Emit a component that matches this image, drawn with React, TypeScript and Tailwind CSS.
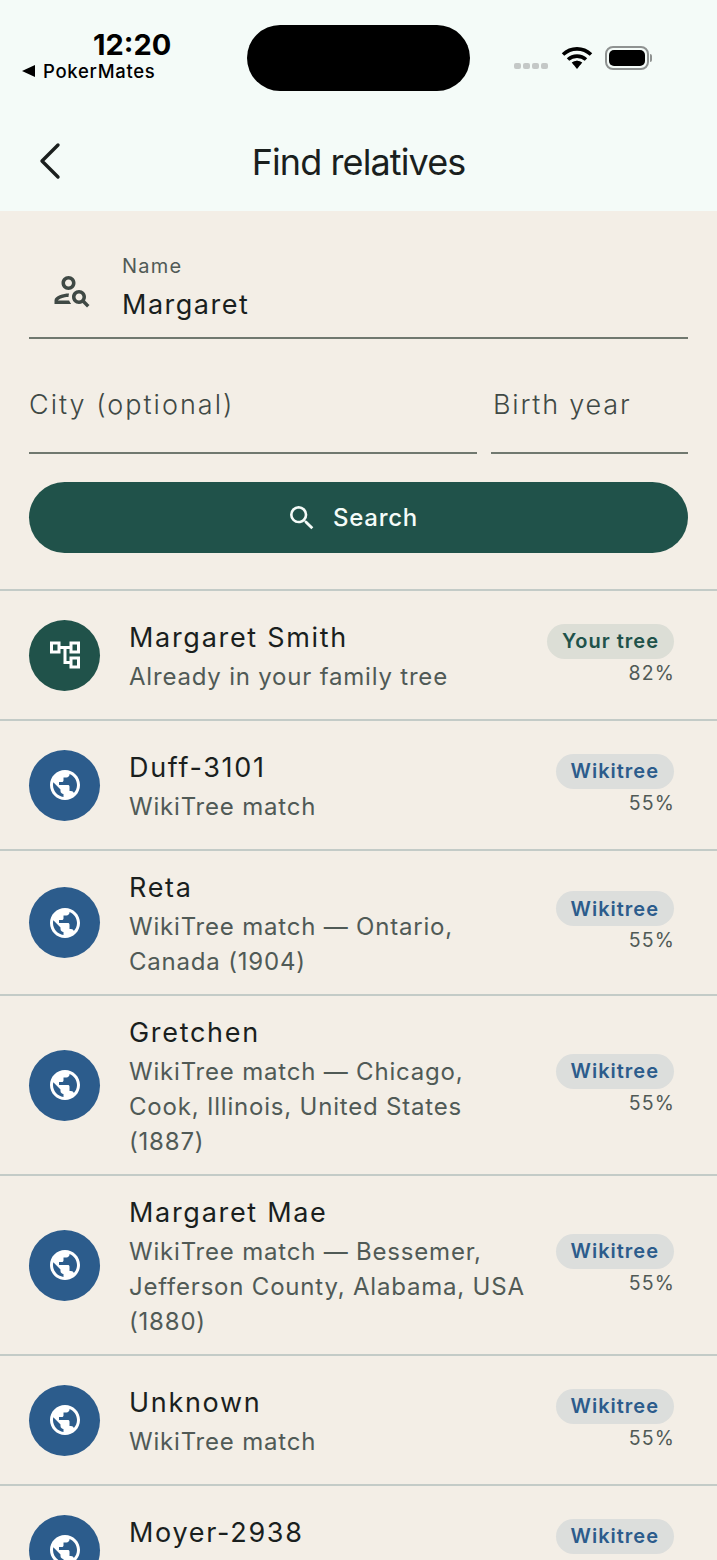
import React from "react";
import { MdOutlineAccountTree, MdOutlinePersonSearch, MdPublic, MdSearch } from "react-icons/md";

interface Relative {
  name: string;
  lines: string[];
  badge: string;
  score: string;
  inTree?: boolean;
}

const relatives: Relative[] = [
  { name: "Margaret Smith", lines: ["Already in your family tree"], badge: "Your tree", score: "82%", inTree: true },
  { name: "Duff-3101", lines: ["WikiTree match"], badge: "Wikitree", score: "55%" },
  { name: "Reta", lines: ["WikiTree match — Ontario,", "Canada (1904)"], badge: "Wikitree", score: "55%" },
  { name: "Gretchen", lines: ["WikiTree match — Chicago,", "Cook, Illinois, United States", "(1887)"], badge: "Wikitree", score: "55%" },
  { name: "Margaret Mae", lines: ["WikiTree match — Bessemer,", "Jefferson County, Alabama, USA", "(1880)"], badge: "Wikitree", score: "55%" },
  { name: "Unknown", lines: ["WikiTree match"], badge: "Wikitree", score: "55%" },
  { name: "Moyer-2938", lines: ["WikiTree match"], badge: "Wikitree", score: "55%" },
];

const StatusBar = () => (
  <div className="relative h-[105px]">
    <div className="absolute left-[93px] top-[27px] text-[29px] font-bold leading-[36px] text-black">12:20</div>
    <div className="absolute left-[22px] top-[60px] flex items-center gap-[7px] text-[18.5px] font-medium leading-[22px] tracking-[0.7px] text-black">
      <svg width="14" height="12" viewBox="0 0 14 12"><path d="M13 0v12L0 6z" fill="#000" /></svg>
      <span>PokerMates</span>
    </div>
    <div className="absolute left-[247px] top-[25px] h-[66px] w-[223px] rounded-[33px] bg-black" />
    <div className="absolute left-[514px] top-[63px] flex gap-[2px]">
      <div className="h-[6px] w-[7px] rounded-[2px] bg-[#c4c8c7]" />
      <div className="h-[6px] w-[7px] rounded-[2px] bg-[#c4c8c7]" />
      <div className="h-[6px] w-[7px] rounded-[2px] bg-[#c4c8c7]" />
      <div className="h-[6px] w-[7px] rounded-[2px] bg-[#c4c8c7]" />
    </div>
    <svg className="absolute left-[561px] top-[46px]" width="32" height="24" viewBox="0 0 32 24" fill="none" stroke="#000" strokeWidth="3.6">
      <path d="M2 8.5C10 1 22 1 30 8.5" />
      <path d="M7 13.5C12 9 20 9 25 13.5" />
      <path d="M11.5 17.5C14 15.5 18 15.5 20.5 17.5" strokeWidth="2.5" />
      <path d="M12 18L16 14.5L20 18L16 23Z" fill="#000" stroke="none" />
    </svg>
    <div className="absolute left-[605px] top-[46px] flex items-center">
      <div className="h-[24px] w-[44px] rounded-[8px] border-2 border-[#8e9291] p-[2px]">
        <div className="h-full w-full rounded-[5px] bg-black" />
      </div>
      <div className="ml-[1px] h-[8px] w-[2px] rounded-r-[2px] bg-[#8e9291]" />
    </div>
  </div>
);

const Header = () => (
  <div className="bg-[#f4fbf8]">
    <StatusBar />
    <div className="relative flex h-[106px] items-start justify-center">
      <svg className="absolute left-[38px] top-[37px]" width="24" height="38" viewBox="0 0 24 38" fill="none" stroke="#1a1f1e" strokeWidth="3.4" strokeLinecap="round" strokeLinejoin="round">
        <path d="M20 3L4 19L20 35" />
      </svg>
      <h1 className="mt-[35px] text-[36px] font-normal leading-[44px] tracking-[-0.9px] text-[#1a1f1e]">Find relatives</h1>
    </div>
  </div>
);

const SearchForm = () => (
  <div className="px-[29px] pt-[37px]">
    <div className="flex h-[91px] items-start border-b-2 border-[#70786f]">
      <div className="flex h-[84px] w-[93px] items-center pl-[22px]">
        <MdOutlinePersonSearch className="text-[42px] text-[#3f4945]" />
      </div>
      <div>
        <div className="mt-[4px] text-[20px] leading-[28px] tracking-[1.2px] text-[#505a56]">Name</div>
        <div className="mt-[7px] text-[27px] leading-[36px] tracking-[1.5px] text-[#1a1f1e]">Margaret</div>
      </div>
    </div>
    <div className="mt-[24px] flex gap-[14px]">
      <div className="h-[91px] flex-1 border-b-2 border-[#70786f] pt-[24px] text-[27px] font-light leading-[36px] tracking-[2px] text-[#3f4945]">City (optional)</div>
      <div className="h-[91px] w-[197px] border-b-2 border-[#70786f] pl-[2px] pt-[24px] text-[27px] font-light leading-[36px] tracking-[1.8px] text-[#3f4945]">Birth year</div>
    </div>
    <button className="mt-[28px] flex h-[71px] w-full items-center justify-center gap-[15px] rounded-full bg-[#20524a] pr-[13px] text-[24px] font-medium tracking-[0.7px] text-[#f4fbf8]">
      <MdSearch className="text-[32px]" />
      <span>Search</span>
    </button>
  </div>
);

const RelativeRow = ({ relative }: { relative: Relative }) => (
  <div className="flex min-h-[130px] items-center border-t-2 border-[#c3cbc7] py-[15px] pl-[29px] pr-[43px]">
    <div className={`flex h-[71px] w-[71px] shrink-0 items-center justify-center rounded-full ${relative.inTree ? "bg-[#20524a]" : "bg-[#2c5c8c]"}`}>
      {relative.inTree ? <MdOutlineAccountTree className="text-[36px] text-white" /> : <MdPublic className="text-[36px] text-white" />}
    </div>
    <div className="ml-[29px] min-w-0 flex-1 pt-[4px]">
      <div className="text-[27px] leading-[36px] tracking-[1.7px] text-[#1a1f1e]">{relative.name}</div>
      <div className="mt-[3px]">
        {relative.lines.map((line) => (
          <div key={line} className="text-[24px] leading-[35px] tracking-[0.8px] text-[#505a56]">{line}</div>
        ))}
      </div>
    </div>
    <div className="flex shrink-0 flex-col items-end">
      <div className={`flex h-[35px] items-center rounded-full px-[15px] text-[20px] font-semibold tracking-[1px] ${relative.inTree ? "bg-[#dcded6] text-[#20524a]" : "bg-[#dcdedc] text-[#2c5c8c]"}`}>
        {relative.badge}
      </div>
      <div className="-mr-px text-[19.5px] leading-[28px] tracking-[1.1px] text-[#505a56]">{relative.score}</div>
    </div>
  </div>
);

export default function App() {
  return (
    <div className="h-[1560px] w-[717px] overflow-hidden bg-[#f3eee6] font-['Inter',sans-serif]">
      <Header />
      <SearchForm />
      <div className="mt-[36px]">
        {relatives.map((relative) => (
          <RelativeRow key={relative.name} relative={relative} />
        ))}
      </div>
    </div>
  );
}
